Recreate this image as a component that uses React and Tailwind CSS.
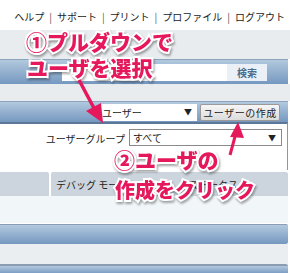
const bar = 'bg-gradient-to-b from-[#b2c8de] via-[#94b0cf] to-[#7598c0]'
const NAV = ['ヘルプ', 'サポート', 'プリント', 'プロファイル', 'ログアウト']

function Annotation({ children, className }) {
  return (
    <div
      className={`absolute font-black text-[#e6185c] leading-none whitespace-nowrap [-webkit-text-stroke:4px_white] [paint-order:stroke_fill] [filter:drop-shadow(1px_2px_1px_rgba(0,0,0,0.35))] ${className}`}
    >
      {children}
    </div>
  )
}

export default function App() {
  return (
    <div className="relative w-[290px] h-[273px] overflow-hidden bg-white font-['Noto_Sans_CJK_JP',sans-serif] text-[#222]">
      {/* top nav */}
      <div className="h-[30px] flex items-center justify-end pr-[5px] pt-[3px] text-[10px]">
        {NAV.map((n, i) => (
          <span key={n} className="flex items-center">
            {i > 0 && <span className="mx-[5px] text-[#555]">|</span>}
            {n}
          </span>
        ))}
      </div>

      <div className="h-[29px] bg-[#e8ecef]" />

      {/* search bar */}
      <div className={`h-[25px] w-[288px] ${bar} border-t border-[#8da4bd] flex items-center justify-end pr-[21px]`}>
        <div className="w-[165px] h-[17px] bg-white" />
        <div className="w-[40px] h-[17px] bg-[#eaf0f5] flex items-center justify-center text-[10px] font-bold text-[#4b6c8e]">
          検索
        </div>
      </div>

      <div className="h-[17px] bg-[#e8ecef]" />

      {/* user select bar */}
      <div className={`h-[21px] w-[288px] ${bar} border-t border-[#8da4bd] flex items-center justify-end pr-[8px] gap-[3px]`}>
        <div className="w-[97px] h-[17px] bg-white flex items-center justify-between pl-[2px] pr-[5px] text-[10px]">
          <span>ユーザー</span>
          <span className="text-[8px]">▼</span>
        </div>
        <div className="w-[80px] h-[17px] bg-gradient-to-b from-[#f6f6f6] to-[#dcdcdc] border border-[#9a9a9a] rounded-[2px] flex items-center justify-center text-[10px] tracking-[0.5px]">
          ユーザーの作成
        </div>
      </div>

      {/* filter panel */}
      <div className="w-[288px] h-[48px] border-t-2 border-[#5d7896] border-r border-r-[#7f9bb8] bg-white flex justify-end pt-[5px] pr-[5px]">
        <div className="flex items-start gap-[4px] text-[10px]">
          <span className="mt-[2px]">ユーザーグループ</span>
          <div className="w-[153px] h-[17px] border border-[#8a8a8a] flex items-center justify-between pl-[3px] pr-[5px]">
            <span>すべて</span>
            <span className="text-[8px]">▼</span>
          </div>
        </div>
      </div>

      {/* table header */}
      <div className="mt-[2px] w-[288px] h-[24px] flex gap-[2px] text-[10px]">
        <div className="w-[49px] bg-[#ccd5de] rounded-tr-[2px]" />
        <div className="flex-1 bg-[#ccd5de] rounded-t-[2px] flex items-center pl-[5px]">
          <span className="w-[132px]">デバッグ モード</span>
          <span>ステータス</span>
        </div>
      </div>

      <div className="w-[288px] h-[27px] bg-[#f1f6f9]" />

      <div className={`mt-[1px] w-[288px] h-[20px] ${bar} border-t border-[#8a9db3] rounded-r-[2px]`} />
      <div className="w-[288px] h-[20px] bg-[#eaeef1]" />
      <div className={`w-[288px] h-[10px] ${bar} border-t-2 border-[#8a9db3] rounded-tr-[2px]`} />

      {/* annotations */}
      <Annotation className="left-[26px] top-[31px] text-[21px]">①プルダウンで</Annotation>
      <Annotation className="left-[27px] top-[57px] text-[21px]">ユーザを選択</Annotation>
      <Annotation className="left-[114px] top-[149px] text-[21px]">②ユーザの</Annotation>
      <Annotation className="left-[115px] top-[180px] text-[20px]">作成をクリック</Annotation>

      <svg className="absolute left-0 top-0 pointer-events-none" width="290" height="273">
        <line x1="79" y1="80" x2="95" y2="110" stroke="#e6185c" strokeWidth="3.5" />
        <polygon points="103,123 86,111 101,103" fill="#e6185c" />
        <line x1="230" y1="155" x2="236" y2="133" stroke="#e6185c" strokeWidth="3" />
        <polygon points="238,122 230,137 244,138" fill="#e6185c" />
      </svg>
    </div>
  )
}
